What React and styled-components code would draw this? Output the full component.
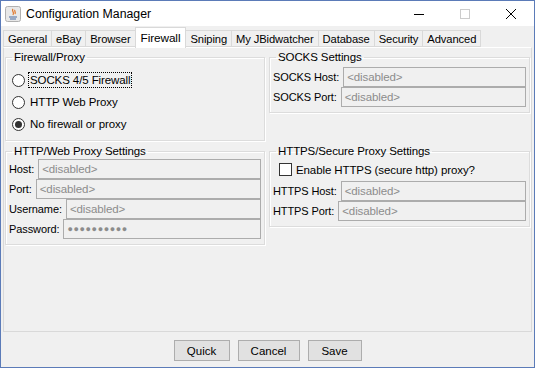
import React from "react";
import styled, { createGlobalStyle } from "styled-components";

const GlobalStyle = createGlobalStyle`
  html, body { margin: 0; padding: 0; background: #f0f0f0; }
  body { font-family: "Liberation Sans", Arial, sans-serif; }
  * { box-sizing: border-box; }
`;

const Window = styled.div`
  width: 535px;
  height: 368px;
  display: flex;
  flex-direction: column;
  border: 1px solid #5b7bb8;
  background: #f0f0f0;
  font-family: "Liberation Sans", Arial, sans-serif;
  font-size: 11px;
  color: #000;
`;

const TitleBar = styled.div`
  height: 25px;
  flex: none;
  display: flex;
  align-items: center;
  background: #fff;
  padding-left: 4px;
`;

const Title = styled.div`
  font-size: 12.3px;
  margin-left: 5px;
  flex: 1;
`;

const Controls = styled.div`
  display: flex;
  height: 100%;
`;

const Control = styled.div`
  width: 46px;
  height: 100%;
  display: flex;
  align-items: center;
  justify-content: center;
`;

const TabStrip = styled.div`
  display: flex;
  align-items: flex-end;
  height: 21px;
  padding-left: 3px;
  flex: none;
`;

const Tab = styled.div`
  height: ${(p) => (p.$active ? "21px" : "17px")};
  margin-bottom: ${(p) => (p.$active ? "-1px" : "0")};
  padding: 0 ${(p) => (p.$active ? "5px" : "4px")};
  display: flex;
  align-items: center;
  border: 1px solid #d9d9d9;
  border-bottom: ${(p) => (p.$active ? "none" : "1px solid #d9d9d9")};
  margin-left: -1px;
  background: ${(p) => (p.$active ? "#fff" : "#f0f0f0")};
  position: relative;
  z-index: ${(p) => (p.$active ? 1 : 0)};
  font-size: ${(p) => (p.$active ? "11.8px" : "11.2px")};
  letter-spacing: -0.1px;
`;

const TabPanel = styled.div`
  margin: 0 2px;
  height: 285px;
  border: 1px solid #d9d9d9;
  border-top-color: #fff;
  background: #f0f0f0;
  display: grid;
  grid-template-columns: 260px 261px;
  grid-template-rows: 94px auto;
  column-gap: 4px;
  padding: 3px 2px 0 1px;
  flex: none;
`;

const Group = styled.fieldset`
  margin: 0;
  padding: ${(p) => p.$lead}px 3px 5px 3px;
  border: 1px solid #dcdcdc;
  box-shadow: inset 1px 1px 0 #fff, 1px 1px 0 #fff;
  align-self: start;
  min-width: 0;
`;

const Legend = styled.legend`
  padding: 0 2px;
  margin-left: 3px;
  font-size: 11.5px;
  line-height: 13px;
  letter-spacing: -0.1px;
`;

const RadioRow = styled.label`
  display: flex;
  align-items: center;
  height: 22px;
  padding-left: 3px;
  gap: 4px;
`;

const RadioDot = styled.span`
  width: 13px;
  height: 13px;
  border-radius: 50%;
  border: 1px solid #333;
  background: #fff;
  display: flex;
  align-items: center;
  justify-content: center;
  &::after {
    content: "";
    width: 7px;
    height: 7px;
    border-radius: 50%;
    background: #333;
    display: ${(p) => (p.$checked ? "block" : "none")};
  }
`;

const RadioText = styled.span`
  outline: ${(p) => (p.$focus ? "1px dotted #000" : "none")};
  padding: 0 1px;
  line-height: 14px;
  font-size: 11.5px;
  letter-spacing: -0.1px;
`;

const FieldRow = styled.div`
  display: flex;
  align-items: center;
  height: 20px;
`;

const FieldLabel = styled.span`
  padding-right: 4px;
  white-space: nowrap;
  font-size: 11px;
  letter-spacing: -0.1px;
`;

const Field = styled.div`
  flex: 1;
  height: 20px;
  border: 1px solid #acacac;
  background: #f0f0f0;
  color: #8c8c8c;
  padding-left: 3px;
  display: flex;
  align-items: center;
  font-size: ${(p) => (p.$secret ? "9px" : "11.5px")};
  letter-spacing: ${(p) => (p.$secret ? "0.6px" : "-0.1px")};
`;

const CheckRow = styled.label`
  display: flex;
  align-items: center;
  gap: 4px;
  height: 23px;
  padding-left: 6px;
  font-size: 11.5px;
  letter-spacing: -0.1px;
`;

const CheckBox = styled.span`
  width: 13px;
  height: 13px;
  border: 1px solid #333;
  background: #fff;
`;

const Buttons = styled.div`
  flex: 1;
  display: flex;
  justify-content: center;
  align-items: center;
  gap: 8px;
  padding-top: 2px;
`;

const Button = styled.button`
  height: 21px;
  width: ${(p) => p.$w}px;
  border: 1px solid #adadad;
  background: #e1e1e1;
  font-family: "Liberation Sans", Arial, sans-serif;
  font-size: 11.5px;
  color: #000;
  padding: 0;
`;

const tabs = ["General", "eBay", "Browser", "Firewall", "Sniping", "My JBidwatcher", "Database", "Security", "Advanced"];

const JavaIcon = () => (
  <svg width="16" height="16" viewBox="0 0 16 16">
    <rect x="0.5" y="0.5" width="15" height="15" rx="2" fill="#e8e8e8" stroke="#b0b0b0" />
    <path d="M4 11 h8 M5 13 h6" stroke="#4a6aa0" strokeWidth="1.2" />
    <path d="M8 3 c-2 2 2 3 0 6 M10 4 c-1 1 1 2 0 4" stroke="#e07020" strokeWidth="1.2" fill="none" />
  </svg>
);

const App = () => (
  <>
    <GlobalStyle />
    <Window>
      <TitleBar>
        <JavaIcon />
        <Title>Configuration Manager</Title>
        <Controls>
          <Control>
            <svg width="10" height="10"><path d="M0 5.5 h10" stroke="#000" /></svg>
          </Control>
          <Control>
            <svg width="10" height="10"><rect x="0.5" y="0.5" width="9" height="9" fill="none" stroke="#ccc" /></svg>
          </Control>
          <Control>
            <svg width="10" height="10"><path d="M0 0 L10 10 M10 0 L0 10" stroke="#000" /></svg>
          </Control>
        </Controls>
      </TitleBar>

      <TabStrip>
        {tabs.map((t) => (
          <Tab key={t} $active={t === "Firewall"}>{t}</Tab>
        ))}
      </TabStrip>

      <TabPanel>
        <Group $lead={5}>
          <Legend>Firewall/Proxy</Legend>
          <RadioRow><RadioDot /><RadioText $focus>SOCKS 4/5 Firewall</RadioText></RadioRow>
          <RadioRow><RadioDot /><RadioText>HTTP Web Proxy</RadioText></RadioRow>
          <RadioRow><RadioDot $checked /><RadioText>No firewall or proxy</RadioText></RadioRow>
        </Group>

        <Group $lead={3}>
          <Legend>SOCKS Settings</Legend>
          <FieldRow><FieldLabel>SOCKS Host:</FieldLabel><Field>&lt;disabled&gt;</Field></FieldRow>
          <FieldRow><FieldLabel>SOCKS Port:</FieldLabel><Field>&lt;disabled&gt;</Field></FieldRow>
        </Group>

        <Group $lead={1}>
          <Legend>HTTP/Web Proxy Settings</Legend>
          <FieldRow><FieldLabel>Host:</FieldLabel><Field>&lt;disabled&gt;</Field></FieldRow>
          <FieldRow><FieldLabel>Port:</FieldLabel><Field>&lt;disabled&gt;</Field></FieldRow>
          <FieldRow><FieldLabel>Username:</FieldLabel><Field>&lt;disabled&gt;</Field></FieldRow>
          <FieldRow><FieldLabel>Password:</FieldLabel><Field $secret>●●●●●●●●●●</Field></FieldRow>
        </Group>

        <Group $lead={0}>
          <Legend>HTTPS/Secure Proxy Settings</Legend>
          <CheckRow><CheckBox /><span>Enable HTTPS (secure http) proxy?</span></CheckRow>
          <FieldRow><FieldLabel>HTTPS Host:</FieldLabel><Field>&lt;disabled&gt;</Field></FieldRow>
          <FieldRow><FieldLabel>HTTPS Port:</FieldLabel><Field>&lt;disabled&gt;</Field></FieldRow>
        </Group>
      </TabPanel>

      <Buttons>
        <Button $w={56}>Quick</Button>
        <Button $w={62}>Cancel</Button>
        <Button $w={54}>Save</Button>
      </Buttons>
    </Window>
  </>
);

export default App;
